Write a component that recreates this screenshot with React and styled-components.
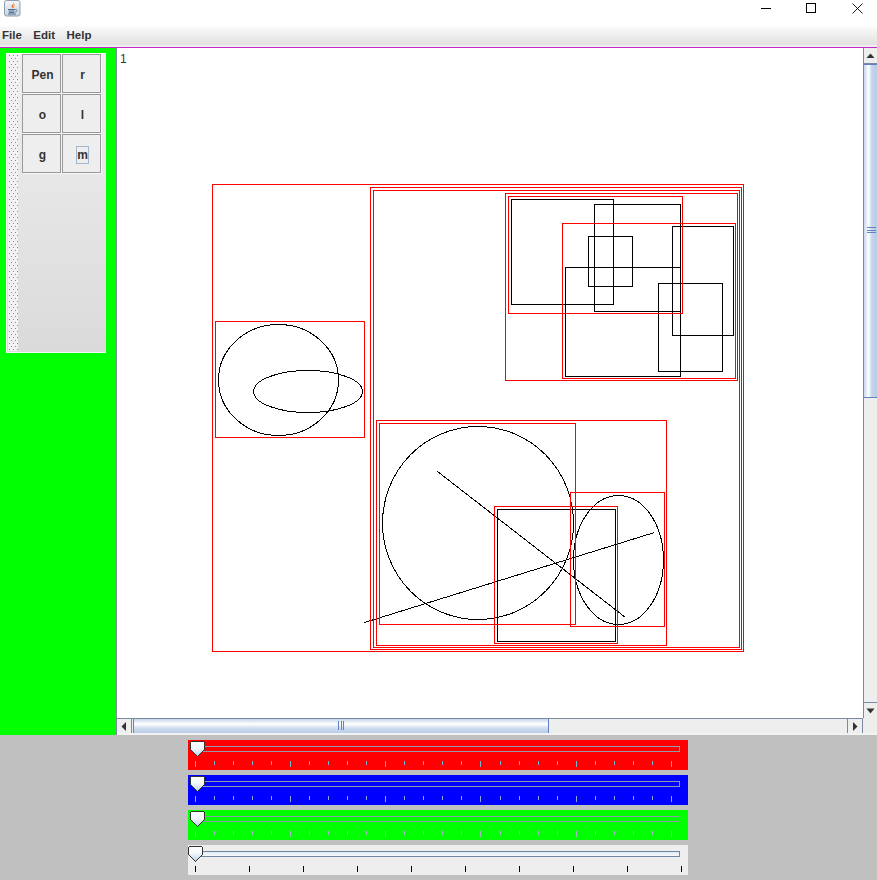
import React from "react";
import styled, { createGlobalStyle } from "styled-components";

const Global = createGlobalStyle`
  html, body { margin: 0; padding: 0; background: #c0c0c0; }
  * { box-sizing: border-box; }
`;

const Frame = styled.div`
  width: 877px; height: 880px; display: flex; flex-direction: column; overflow: hidden;
  font-family: "Liberation Sans", Arial, sans-serif; font-size: 12px; color: #333;
`;
const TitleBar = styled.div`
  height: 26px; background: #fff; display: flex; align-items: flex-start; justify-content: space-between;
`;
const AppIcon = styled.svg`width: 17px; height: 17px; margin-left: 4px; display: block;`;
const WindowControls = styled.div`display: flex; gap: 34px; margin-right: 14px; margin-top: 3px;`;
const WinIcon = styled.svg`width: 11px; height: 11px; display: block;`;
const CloseIcon = styled(WinIcon)`margin-left: 1px;`;
const MenuBar = styled.div`
  height: 22px; padding: 0 0 3px 2px; display: flex; align-items: center; gap: 11.5px;
  background: linear-gradient(#fbfbfb 0%, #e0e0e0 90%, #eee 90%, #eee 100%);
  border-bottom: 1px solid #c828c8;
`;
const MenuItem = styled.span`font-weight: bold; font-size: 11.5px; color: #333;`;
const Main = styled.div`height: 687px; display: flex;`;
const Side = styled.div`width: 116px; background: #0f0; padding: 5px 10px 0 6px;`;
const ToolBar = styled.div`
  height: 300px; display: flex; gap: 4px; padding: 0 0 0 2px;
  background: linear-gradient(#f0f0f0, #dadada);
  border-top: 1px solid #fff; border-left: 1px solid #fff;
  border-bottom: 1px solid #f4f4f4;
`;
const Grip = styled.div`
  width: 10px; height: 296px; margin: 1px 0 0 -1px; background-color: #f2f2f2;
  background-image:
    radial-gradient(circle at 0.5px 0.5px, #888 0.75px, transparent 0.75px),
    radial-gradient(circle at 2.5px 3.5px, #888 0.75px, transparent 0.75px);
  background-size: 4px 6px;
  background-position: 1px 0;
`;
const ToolGrid = styled.div`
  display: grid; grid-template-columns: 39px 39px; grid-auto-rows: 39px; gap: 1px; align-content: start;
`;
const ToolButton = styled.button`
  padding: 2px 0 0 2px; margin: 0; border: 1px solid #999; background: #eee; box-shadow: 1px 1px 0 #f8f8f8;
  font: bold 12px "Liberation Sans", Arial, sans-serif; color: #333;
  display: flex; align-items: center; justify-content: center; border-radius: 0;
`;
const Focus = styled.span`
  display: block; border: 1px solid #a3b8cc; padding: 0; width: 13px; height: 18px; line-height: 16px; text-align: center;
`;
const ScrollPane = styled.div`
  flex: 1; border-left: 1px solid #7a8aa0; display: grid;
  grid-template-columns: 746px 14px; grid-template-rows: 670px 1px 14px 2px;
`;
const Viewport = styled.div`grid-column: 1; grid-row: 1; position: relative; background: #fff; overflow: hidden;`;
const Canvas = styled.svg`display: block; shape-rendering: crispEdges;`;
const PageNumber = styled.span`position: absolute; left: 3px; top: 5px; font-size: 12px; line-height: 13px; color: #333;`;
const VBar = styled.div`
  grid-column: 2; grid-row: 1; display: flex; flex-direction: column; background: #eee; border-left: 1px solid #7a8aa0;
`;
const ArrowBox = styled.div`
  flex: none; display: flex; align-items: center; justify-content: center; background: #eee;
  width: ${p => (p.$h ? 15 : 13)}px; height: ${p => (p.$h ? 14 : 16)}px;
  border-${p => p.$side}: 1px solid #7a8aa0;
`;
const RightBox = styled(ArrowBox)`width: 16px; border-right: 1px solid #7a8aa0;`;
const Arrow = styled.svg`display: block; fill: #333;`;
const VThumb = styled.div`
  height: 334px; flex: none; display: flex; align-items: center; justify-content: center;
  background: linear-gradient(90deg, #c8d8ee, #fff 35%, #c4d6ec 60%, #b8cde6);
  border-top: 1px solid #6382bf; border-bottom: 1px solid #6382bf;
  padding-left: 2px; padding-bottom: 3px;
`;
const VGrip = styled.div`
  width: 9px; height: 6px; border-top: 1px solid #6382bf; border-bottom: 1px solid #6382bf;
  background: linear-gradient(#6382bf 0 0) 0 2px / 100% 1px no-repeat;
`;
const HLine = styled.div`grid-column: 1; grid-row: 2; background: #7a8aa0;`;
const HBar = styled.div`grid-column: 1; grid-row: 3; display: flex; background: #eee;`;
const HThumb = styled.div`
  width: 416px; margin-left: 1px; flex: none; display: flex; align-items: center; justify-content: center;
  background: linear-gradient(#c4d4ea, #fff 35%, #cfddef 65%, #b8cde6);
  border-left: 1px solid #6382bf; border-right: 1px solid #6382bf;
`;
const HGrip = styled.div`
  width: 6px; height: 9px; border-left: 1px solid #6382bf; border-right: 1px solid #6382bf; margin-bottom: 1px;
  background: linear-gradient(#6382bf 0 0) 2px 0 / 1px 100% no-repeat;
`;
const TrackFill = styled.div`flex: 1;`;
const Corner = styled.div`grid-column: 2; grid-row: 2 / 4; background: #eee;`;
const BottomEdge = styled.div`grid-column: 1 / 3; grid-row: 4; background: #f2f2f2;`;
const Bottom = styled.div`
  flex: 1; background: #c0c0c0; display: flex; flex-direction: column; align-items: flex-start; gap: 5px; padding: 5px 0 0 188px;
`;
const SliderBox = styled.div`
  position: relative; width: 500px; height: 30px; padding-top: 6px; background: ${p => p.$bg};
`;
const Track = styled.div`
  height: 6px; margin: 0 8px 0 7px;
  border-style: solid; border-width: 1.5px 1px 1.5px 0;
  background: ${p => p.$fill ? "linear-gradient(#dfe8f3, #f8fafc)" : "transparent"};
  border-color: ${p => p.$fill ? "#7186a0" : "#8f9bac"};
`;
const Ticks = styled.div`
  display: flex; justify-content: space-between; align-items: flex-start;
  margin: 9px 0 0 7px; width: ${p => p.$w}px;
`;
const Tick = styled.i`
  display: block; width: 1px; height: ${p => p.$h}px; background: ${p => p.$c};
`;
const Thumb = styled.svg`
  position: absolute; top: 1px; left: ${p => p.$x}px; width: 16px; height: 17px; display: block;
`;

const Rect = ({ c, x1, y1, x2, y2 }) => (
  <rect x={x1 + 0.5} y={y1 + 0.5} width={x2 - x1} height={y2 - y1} fill="none" stroke={c} strokeWidth="1" />
);
const Oval = ({ x1, y1, x2, y2 }) => (
  <ellipse cx={(x1 + x2) / 2 + 0.5} cy={(y1 + y2) / 2 + 0.5} rx={(x2 - x1) / 2} ry={(y2 - y1) / 2} fill="none" stroke="#000" />
);

const reds = [
  [212, 184, 743, 651], [370, 187, 741, 649], [373, 190, 739, 647], [505, 193, 737, 380],
  [508, 196, 682, 313], [562, 223, 735, 378], [376, 420, 666, 645], [379, 423, 575, 624],
  [494, 506, 617, 643], [570, 492, 664, 626], [215, 321, 364, 437],
];
const blacks = [
  [511, 199, 613, 304], [594, 204, 680, 311], [588, 236, 632, 286], [565, 267, 680, 376],
  [672, 226, 733, 335], [658, 283, 722, 371], [497, 509, 615, 641],
];
const ovals = [
  [382, 426, 573, 619], [573, 495, 663, 624], [218, 324, 338, 435], [253, 370, 362, 412],
];

const JavaIcon = () => (
  <AppIcon viewBox="0 0 17 17">
    <defs>
      <linearGradient id="ic" x1="0" y1="0" x2="0" y2="1">
        <stop offset="0" stopColor="#f4f6f9" />
        <stop offset="1" stopColor="#c9d2de" />
      </linearGradient>
    </defs>
    <rect x="0.5" y="0.5" width="15.5" height="15.5" rx="2" fill="url(#ic)" stroke="#8d9cb0" />
    <path d="M9.2 2 C10.5 4 7 5 7.6 6.6 C8 7.6 9 8 8.8 8.6 C10.4 7.6 9.6 6.6 9 6 C8.6 5 11 4.2 9.2 2 Z" fill="#e8701a" />
    <path d="M10.5 4.5 C9.6 5.4 10.4 6 10.6 6.6" stroke="#f09030" strokeWidth="0.8" fill="none" />
    <path d="M4 9.5 H11 M4.5 11 H10.5 M5 12.5 H10 M4 14 H12" stroke="#4d6f92" strokeWidth="1" fill="none" />
    <path d="M11 9.5 C14 9 14 12 10.5 12" stroke="#4d6f92" strokeWidth="0.8" fill="none" />
  </AppIcon>
);

const tone = { red: "#80b0d0", blue: "#8fa6e0", green: "#a6b6c6" };

const SliderThumb = ({ x, id }) => (
  <Thumb $x={x} viewBox="0 0 16 17">
    <defs>
      <linearGradient id={id} x1="0" y1="0" x2="0" y2="1">
        <stop offset="0" stopColor="#fff" />
        <stop offset="0.45" stopColor="#f4f8fc" />
        <stop offset="1" stopColor="#b9cfe8" />
      </linearGradient>
    </defs>
    <path d="M1.5 0.5 H13.5 L14.5 1.5 V8.5 L7.5 15.5 L0.5 8.5 V1.5 Z" fill={`url(#${id})`} stroke="#333" shapeRendering="crispEdges" />
  </Thumb>
);

const ColorSlider = ({ bg, c, id }) => (
  <SliderBox $bg={bg}>
    <Track />
    <Ticks $w={477}>
      {Array.from({ length: 26 }, (_, i) => (
        <Tick key={i} $h={i % 5 === 0 ? 6 : 4} $c={c} />
      ))}
    </Ticks>
    <SliderThumb x={2} id={id} />
  </SliderBox>
);

export default function App() {
  return (
    <Frame>
      <Global />
      <TitleBar>
        <JavaIcon />
        <WindowControls>
          <WinIcon viewBox="0 0 11 11">
            <path d="M0 5.5 H10" stroke="#000" fill="none" />
          </WinIcon>
          <WinIcon viewBox="0 0 11 11">
            <rect x="0.5" y="0.5" width="9" height="9" stroke="#000" fill="none" />
          </WinIcon>
          <CloseIcon viewBox="0 0 11 11">
            <path d="M0.5 0.5 L10.5 10.5 M10.5 0.5 L0.5 10.5" stroke="#000" fill="none" strokeWidth="0.9" />
          </CloseIcon>
        </WindowControls>
      </TitleBar>
      <MenuBar>
        <MenuItem>File</MenuItem>
        <MenuItem>Edit</MenuItem>
        <MenuItem>Help</MenuItem>
      </MenuBar>
      <Main>
        <Side>
          <ToolBar>
            <Grip />
            <ToolGrid>
              <ToolButton>Pen</ToolButton>
              <ToolButton>r</ToolButton>
              <ToolButton>o</ToolButton>
              <ToolButton>l</ToolButton>
              <ToolButton>g</ToolButton>
              <ToolButton><Focus>m</Focus></ToolButton>
            </ToolGrid>
          </ToolBar>
        </Side>
        <ScrollPane>
          <Viewport>
            <Canvas width="746" height="670" viewBox="117 48 746 670">
              {blacks.map(([x1, y1, x2, y2], i) => <Rect key={i} c="#000" x1={x1} y1={y1} x2={x2} y2={y2} />)}
              {ovals.map(([x1, y1, x2, y2], i) => <Oval key={i} x1={x1} y1={y1} x2={x2} y2={y2} />)}
              <line x1="437.5" y1="471.5" x2="625.5" y2="617.5" stroke="#000" />
              <line x1="364.5" y1="622.5" x2="654.5" y2="532.5" stroke="#000" />
              {reds.map(([x1, y1, x2, y2], i) => <Rect key={i} c="#f00" x1={x1} y1={y1} x2={x2} y2={y2} />)}
            </Canvas>
            <PageNumber>1</PageNumber>
          </Viewport>
          <VBar>
            <ArrowBox $side="bottom">
              <Arrow width="9" height="6" viewBox="0 0 9 6"><path d="M4.5 0.5 L8.5 5 H0.5 Z" /></Arrow>
            </ArrowBox>
            <VThumb><VGrip /></VThumb>
            <TrackFill />
            <ArrowBox $side="top">
              <Arrow width="9" height="6" viewBox="0 0 9 6"><path d="M0.5 0.5 H8.5 L4.5 5.5 Z" /></Arrow>
            </ArrowBox>
          </VBar>
          <HLine />
          <HBar>
            <ArrowBox $h $side="right">
              <Arrow width="6" height="9" viewBox="0 0 6 9"><path d="M5 0 V9 L0.5 4.5 Z" /></Arrow>
            </ArrowBox>
            <HThumb><HGrip /></HThumb>
            <TrackFill />
            <RightBox $h $side="left">
              <Arrow width="6" height="9" viewBox="0 0 6 9"><path d="M1 0 V9 L5.5 4.5 Z" /></Arrow>
            </RightBox>
          </HBar>
          <Corner />
          <BottomEdge />
        </ScrollPane>
      </Main>
      <Bottom>
        <ColorSlider bg="#f00" c={tone.red} id="t1" />
        <ColorSlider bg="#00f" c={tone.blue} id="t2" />
        <ColorSlider bg="#0f0" c={tone.green} id="t3" />
        <SliderBox $bg="#eee">
          <Track $fill />
          <Ticks $w={487}>
            {Array.from({ length: 10 }, (_, i) => <Tick key={i} $h={6} $c="#000" />)}
          </Ticks>
          <SliderThumb x={0} id="t4" />
        </SliderBox>
      </Bottom>
    </Frame>
  );
}
